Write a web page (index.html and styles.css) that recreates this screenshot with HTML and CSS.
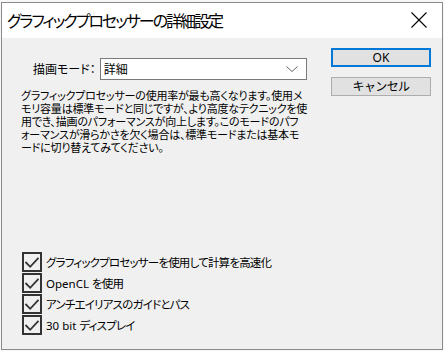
FILE: index.html
```html
<!DOCTYPE html>
<html>
<head>
    <meta charset="utf-8">
    <title>グラフィックプロセッサーの詳細設定</title>
    <link rel="stylesheet" href="styles.css">
</head>
<body>
    <div class="dialog">
        <div class="titlebar">
            <span class="title">グラフィックプロセッサーの詳細設定</span>
            <svg class="close" width="16" height="16" viewBox="0 0 16 16">
                <path d="M0.5 0.5 L15.5 15.5 M15.5 0.5 L0.5 15.5" stroke="#000" stroke-width="1.1" fill="none"/>
            </svg>
        </div>

        <div class="panel">
            <div class="top">
                <div class="main">
                    <div class="mode-row">
                        <span class="mode-label">描画モード：</span>
                        <div class="select">
                            <span>詳細</span>
                            <svg width="12" height="6" viewBox="0 0 12 6">
                                <path d="M0.5 0.5 L6 5.5 L11.5 0.5" stroke="#666" stroke-width="1" fill="none"/>
                            </svg>
                        </div>
                    </div>
                    <p class="desc">グラフィックプロセッサーの使用率が最も高くなります。使用メ<br>モリ容量は標準モードと同じですが、より高度なテクニックを使<br>用でき、描画のパフォーマンスが向上します。このモードのパフ<br>ォーマンスが滑らかさを欠く場合は、標準モードまたは基本モ<br>ードに切り替えてみてください。</p>
                </div>
                <div class="buttons">
                    <button class="btn btn-default">OK</button>
                    <button class="btn">キャンセル</button>
                </div>
            </div>

            <div class="checks">
                <label class="check"><span class="box"><svg width="16" height="16" viewBox="0 0 16 16"><path d="M1.5 8 L6.2 12.8 L14.5 3.8" stroke="#333" stroke-width="1.8" fill="none"/></svg></span>グラフィックプロセッサーを使用して計算を高速化</label>
                <label class="check"><span class="box"><svg width="16" height="16" viewBox="0 0 16 16"><path d="M1.5 8 L6.2 12.8 L14.5 3.8" stroke="#333" stroke-width="1.8" fill="none"/></svg></span><span class="latin">OpenCL </span>を使用</label>
                <label class="check"><span class="box"><svg width="16" height="16" viewBox="0 0 16 16"><path d="M1.5 8 L6.2 12.8 L14.5 3.8" stroke="#333" stroke-width="1.8" fill="none"/></svg></span>アンチエイリアスのガイドとパス</label>
                <label class="check"><span class="box"><svg width="16" height="16" viewBox="0 0 16 16"><path d="M1.5 8 L6.2 12.8 L14.5 3.8" stroke="#333" stroke-width="1.8" fill="none"/></svg></span><span class="latin">30 bit </span>ディスプレイ</label>
            </div>
        </div>
    </div>
</body>
</html>
```

FILE: styles.css
```css
body {
    margin: 0;
    background-color: #f7f7f7;
    font-family: "Noto Sans", "Noto Sans CJK JP", sans-serif;
    font-feature-settings: "palt";
    color: #000;
}

.dialog {
    margin: 2px 0 0 1px;
    width: 440px;
    height: 346px;
    border: 1px solid #8a8a8a;
    display: flex;
    flex-direction: column;
}

.titlebar {
    height: 35px;
    background-color: #fff;
    display: flex;
    align-items: center;
    justify-content: space-between;
    padding: 0 15px 0 5px;
}

.title {
    font-size: 16px;
    letter-spacing: -2px;
    margin-top: -1px;
}

.close {
    margin-top: -2px;
}

.panel {
    flex: 1;
    background-color: #f0f0f0;
    display: flex;
    flex-direction: column;
    justify-content: space-between;
    padding: 10px 0 14px 0;
}

.top {
    display: flex;
    justify-content: space-between;
}

.main {
    padding-left: 19px;
    padding-top: 10px;
}

.mode-row {
    display: flex;
    align-items: center;
    padding-left: 12px;
}

.mode-label {
    font-size: 12px;
    margin-right: 4px;
}

.select {
    width: 192px;
    height: 20px;
    border: 1px solid #7a7a7a;
    background-color: #fff;
    display: flex;
    align-items: center;
    justify-content: space-between;
    padding: 0 8px 0 5px;
    font-size: 12px;
}

.select span {
    margin-left: -2px;
}

.desc {
    margin: 9px 0 0 0;
    font-size: 11px;
    line-height: 13px;
    letter-spacing: -0.2px;
}

.buttons {
    display: flex;
    flex-direction: column;
    gap: 10px;
    padding-right: 11px;
}

.btn {
    width: 100px;
    height: 19px;
    padding: 0;
    font-family: inherit;
    font-size: 12px;
    background-color: #e1e1e1;
    border: 1px solid #adadad;
    line-height: 15px;
}

.btn-default {
    border: 2px solid #0078d7;
}

.btn + .btn {
    letter-spacing: -0.6px;
}

.checks {
    display: flex;
    flex-direction: column;
    gap: 1px;
    padding-left: 20px;
}

.check {
    display: flex;
    align-items: center;
    font-size: 11.5px;
    letter-spacing: -0.8px;
    height: 20px;
    white-space: pre;
}

.latin {
    letter-spacing: 0;
}

.box {
    width: 16px;
    height: 16px;
    border: 2px solid #333;
    margin-right: 4px;
    display: flex;
}
```
